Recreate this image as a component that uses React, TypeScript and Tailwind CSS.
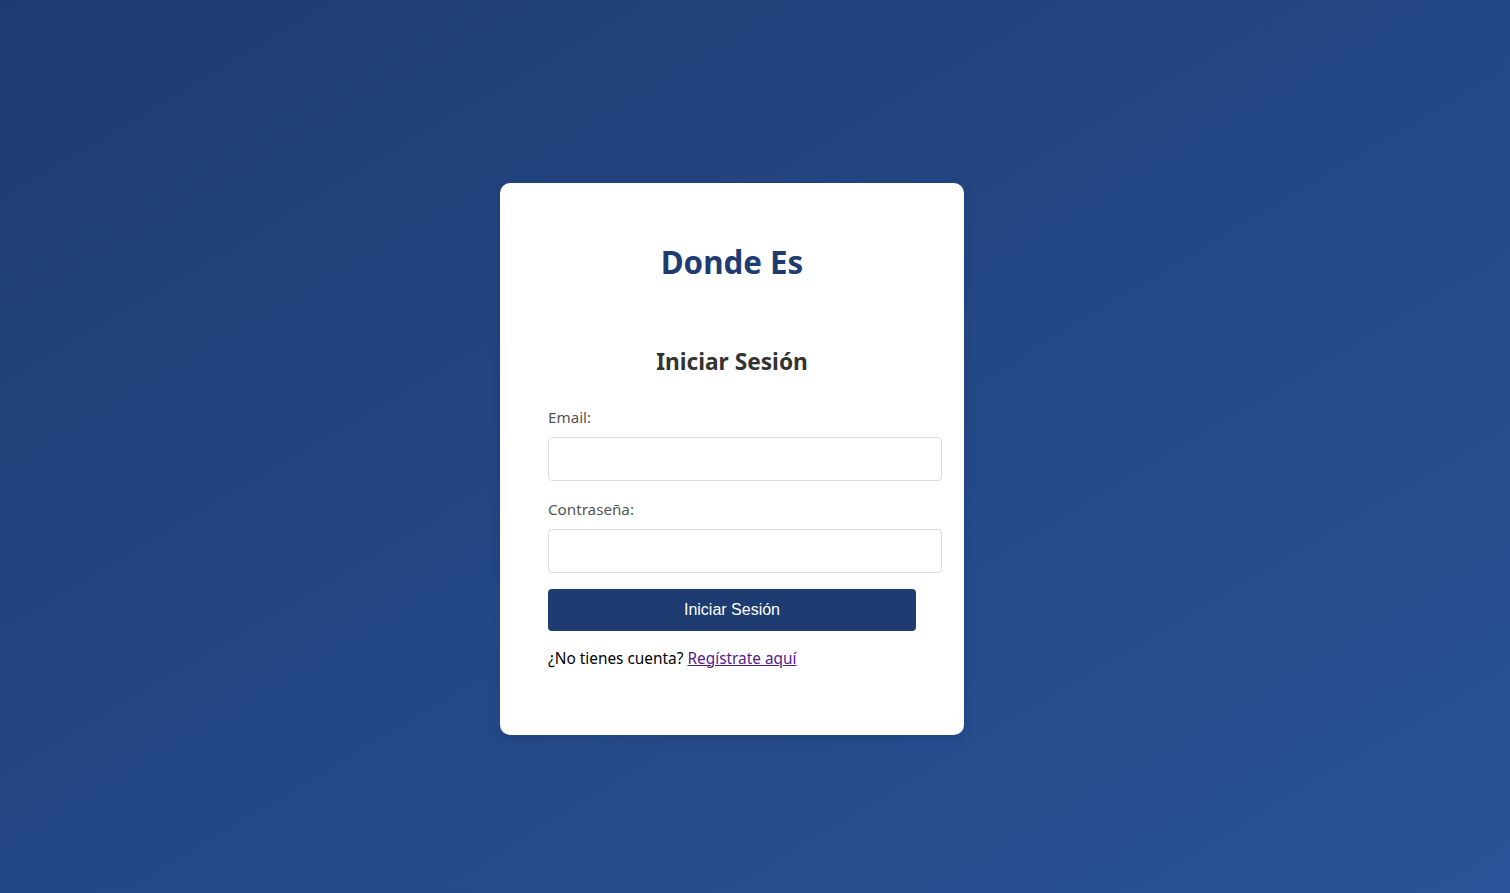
export default function App() {
  return (
    <div className="min-h-screen w-full flex items-center justify-center pr-[46px] pt-6 bg-gradient-to-br from-[#1e3c72] to-[#2a5298] font-['Noto_Sans',sans-serif]">
      <div className="w-[464px] bg-white rounded-[10px] px-12 pt-[59px] pb-16 shadow-[0_4px_12px_rgba(0,0,0,0.1)]">
        <h1 className="text-center text-[31.3px] leading-[40px] font-bold text-[#1e3c72]">Donde Es</h1>
        <h2 className="mt-16 text-center text-[22.7px] leading-8 font-bold text-[#333]">Iniciar Sesión</h2>
        <form className="mt-[27px] flex flex-col" onSubmit={(e) => e.preventDefault()}>
          <label className="text-[15.2px] leading-6 text-[#555]">Email:</label>
          <input type="email" className="mt-2 w-[394px] h-11 px-3 border border-[#ddd] rounded-[4px] outline-none" />
          <label className="mt-4 text-[15.2px] leading-6 text-[#555]">Contraseña:</label>
          <input type="password" className="mt-2 w-[394px] h-11 px-3 border border-[#ddd] rounded-[4px] outline-none" />
          <button type="submit" className="mt-4 w-full h-[42px] bg-[#1e3c72] text-white text-base rounded-[4px] font-['Liberation_Sans',Arial,sans-serif]">
            Iniciar Sesión
          </button>
        </form>
        <p className="mt-4 text-[15.4px] leading-6 text-black">
          ¿No tienes cuenta? <a href="#" className="underline text-[#551a8b]">Regístrate aquí</a>
        </p>
      </div>
    </div>
  );
}
